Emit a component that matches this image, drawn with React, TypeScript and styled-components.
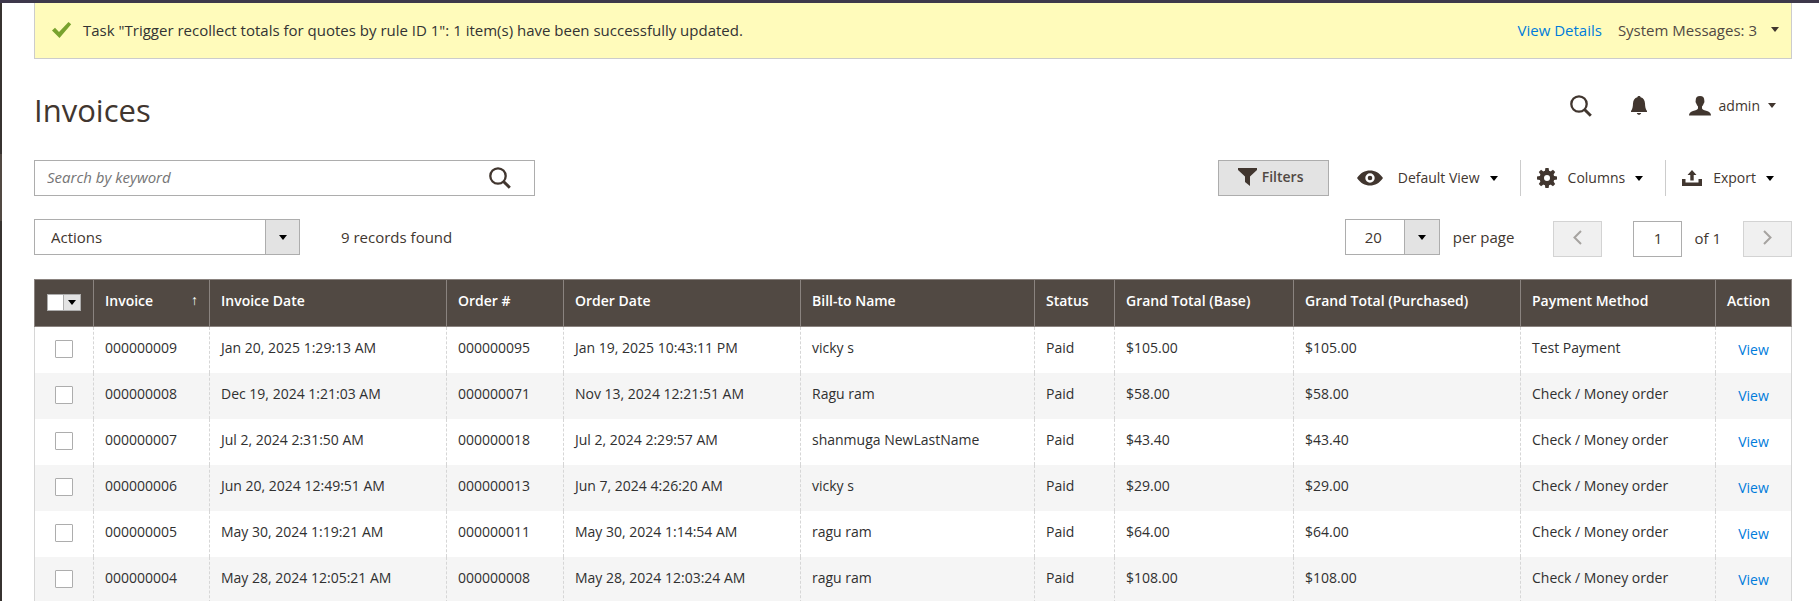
import React from "react";
import styled, { createGlobalStyle } from "styled-components";

const ink = "#41362f";
const border = "#adadad";

const GlobalStyle = createGlobalStyle`
  *, *::before, *::after { box-sizing: border-box; }
  body {
    margin: 0;
    background: #fff;
    color: ${ink};
    font-family: "Open Sans", "Noto Sans", sans-serif;
    font-size: 15px;
    line-height: 20px;
  }
  button, input, select { font: inherit; color: inherit; margin: 0; }
  button { cursor: pointer; }
`;

const Page = styled.div`
  display: flex;
  height: 100vh;
  overflow: hidden;
  border-top: 3px solid #3e384b;
`;

const MenuEdge = styled.div`
  flex: none;
  width: 2px;
  padding-top: 151px;
  background: #373330;
`;

const ActiveMenuEdge = styled.div`
  height: 67px;
  background: #514943;
`;

const Content = styled.main`
  flex: 1;
  min-width: 0;
  padding: 0 27px 0 32px;
`;

const Link = styled.a`
  color: #007bdb;
  text-decoration: none;
`;

const Banner = styled.div`
  display: flex;
  align-items: center;
  height: 56px;
  padding: 0 12px 2px 16px;
  background: #fffbbb;
  border: 1px solid #ccc;
  border-top: 0;
`;

const BannerText = styled.p`
  flex: 1;
  margin: 0 0 0 11px;
  color: #333;
`;

const PlainButton = styled.button<{ $gap?: number }>`
  display: inline-flex;
  align-items: center;
  gap: ${(p) => p.$gap ?? 0}px;
  padding: 0;
  border: 0;
  background: none;
  color: ${ink};
  white-space: nowrap;
`;

const MessagesButton = styled(PlainButton)`
  margin-left: 16px;
  color: #514943;
`;

const Caret = styled.span<{ $black?: boolean }>`
  width: 0;
  height: 0;
  border: 4px solid transparent;
  border-top: 5px solid ${(p) => (p.$black ? "#000" : ink)};
  border-bottom: 0;
`;

const Header = styled.header`
  display: flex;
  align-items: center;
  height: 101px;
  padding-right: 16px;
`;

const Title = styled.h1`
  flex: 1;
  margin: 0;
  font-size: 31px;
  font-weight: 400;
  line-height: 40px;
`;

const HeaderTools = styled.div`
  display: flex;
  align-items: center;
  margin-bottom: 8px;
  font-size: 14px;
`;

const NotificationButton = styled(PlainButton)`
  margin: 0 42px 0 38px;
`;

const Toolbar = styled.div`
  display: flex;
  justify-content: space-between;
  align-items: flex-start;
`;

const SearchForm = styled.form`
  display: flex;
  align-items: center;
  width: 501px;
  height: 36px;
  padding-right: 22px;
  border: 1px solid ${border};
`;

const SearchInput = styled.input`
  flex: 1;
  min-width: 0;
  height: 100%;
  padding: 0 12px 2px;
  border: 0;
  outline: 0;
  background: none;
  &::placeholder { color: #757575; font-style: italic; opacity: 1; }
`;

const GridTools = styled.div`
  display: flex;
  align-items: center;
  font-size: 14px;
`;

const FilterButton = styled.button`
  display: flex;
  align-items: center;
  gap: 5px;
  width: 111px;
  height: 36px;
  margin-right: 12px;
  padding: 0 19px 2px;
  background: #e3e3e3;
  border: 1px solid ${border};
  color: #514943;
  font-weight: 600;
`;

const Tool = styled.div<{ $divided?: boolean }>`
  display: flex;
  align-items: center;
  height: 36px;
  padding: 0 22px 0 16px;
  border-left: ${(p) => (p.$divided ? "1px solid #ccc" : "0")};
  &:last-child { padding-right: 18px; }
`;

const ToolLabel = styled.span`
  margin-right: 10px;
`;

const SecondRow = styled(Toolbar)`
  margin-top: 23px;
`;

const Group = styled.div`
  display: flex;
  align-items: flex-start;
  line-height: 36px;
`;

const Pager = styled(Group)`
  margin-top: 2px;
`;

const SelectBox = styled.div<{ $width: number; $arrow: number }>`
  display: grid;
  grid-template-columns: 1fr ${(p) => p.$arrow}px;
  grid-template-rows: 100%;
  width: ${(p) => p.$width}px;
  height: 36px;
  border: 1px solid ${border};
  background: #fff;
  line-height: 20px;
`;

const Select = styled.select<{ $pad: number }>`
  grid-area: 1 / 1 / 2 / 3;
  appearance: none;
  padding: 0 0 1px ${(p) => p.$pad}px;
  border: 0;
  border-radius: 0;
  background: none;
  outline: 0;
`;

const SelectArrow = styled.span`
  grid-area: 1 / 2 / 2 / 3;
  display: flex;
  align-items: center;
  justify-content: center;
  border-left: 1px solid ${border};
  background: #e3e3e3;
  pointer-events: none;
`;

const Records = styled.span`
  margin-left: 41px;
`;

const PerPage = styled.label`
  margin: 0 39px 0 13px;
`;

const PageButton = styled.button`
  display: flex;
  align-items: center;
  justify-content: center;
  width: 49px;
  height: 36px;
  padding: 0 0 3px;
  background: #f0f0f0;
  border: 1px solid #d3d3d3;
`;

const PageInput = styled.input`
  width: 49px;
  height: 36px;
  margin: 0 12px 0 31px;
  padding: 0 0 2px;
  border: 1px solid ${border};
  text-align: center;
`;

const PageTotal = styled.label`
  margin-right: 22px;
  line-height: 34px;
`;

const TableWrap = styled.div`
  margin-top: 22px;
  overflow-x: auto;
  overflow-y: hidden;
`;

const Table = styled.table`
  width: 100%;
  table-layout: fixed;
  border-collapse: separate;
  border-spacing: 0;
  font-size: 14px;
`;

const Col = styled.col<{ $width: number }>`
  width: ${(p) => p.$width}px;
`;

const HeadCell = styled.th`
  height: 48px;
  padding: 0 11px 4px;
  background: #514943;
  border: 1px solid #8a837f;
  border-right: 0;
  color: #fff;
  font-weight: 600;
  text-align: left;
  white-space: nowrap;
  &:last-child { border-right: 1px solid #8a837f; }
`;

const HeadInner = styled.div`
  display: flex;
  justify-content: space-between;
`;

const SortArrow = styled.span`
  font-weight: 400;
  line-height: 18px;
`;

const MassSelect = styled.div`
  display: flex;
  width: 34px;
  height: 17px;
  margin: 2px 0 0 1px;
  border: 1px solid ${border};
  background: #fff;
`;

const MassCheckbox = styled.input`
  flex: 1;
  appearance: none;
`;

const MassButton = styled.button`
  display: flex;
  align-items: center;
  justify-content: center;
  width: 17px;
  padding: 0;
  background: #e3e3e3;
  border: 0;
  border-left: 1px solid ${border};
`;

const Row = styled.tr`
  &:nth-child(even) { background: #f5f5f5; }
`;

const Cell = styled.td<{ $center?: boolean }>`
  height: 46px;
  padding: ${(p) => (p.$center ? "0 0 1px" : "0 11px 5px")};
  border-left: 1px dashed #d6d6d6;
  color: #303030;
  text-align: ${(p) => (p.$center ? "center" : "left")};
  white-space: nowrap;
  &:first-child { border-left-style: solid; }
  &:last-child { border-right: 1px solid #d6d6d6; }
`;

const RowCheckbox = styled.input`
  appearance: none;
  display: block;
  width: 18px;
  height: 18px;
  margin: 0 auto 1px;
  background: #fff;
  border: 1px solid ${border};
  border-radius: 1px;
`;

const Icon = styled.svg<{ $right?: number }>`
  display: block;
  flex: none;
  margin-right: ${(p) => p.$right ?? 0}px;
  fill: ${ink};
`;

const SearchIcon = () => (
  <Icon width="24" height="24" viewBox="0 0 24 24" aria-hidden="true">
    <circle cx="10" cy="10" r="7.700" fill="none" stroke={ink} strokeWidth="2.300" />
    <path d="M15.500 15.500l6.300 6.200" fill="none" stroke={ink} strokeWidth="3" />
  </Icon>
);

const toothAngles = [0, 45, 90, 135, 180, 225, 270, 315];

const GearIcon = () => (
  <Icon $right={11} width="20" height="20" viewBox="0 0 20 20" aria-hidden="true">
    <circle cx="10" cy="10" r="5.200" fill="none" stroke={ink} strokeWidth="4.400" />
    {toothAngles.map((angle) => (
      <path key={angle} d="M7.700 4l.7-4h3.200l.7 4z" transform={`rotate(${angle} 10 10)`} />
    ))}
  </Icon>
);

const widths = [59, 116, 237, 117, 237, 234, 80, 179, 227, 195, 77];
const headings = [
  "Invoice Date",
  "Order #",
  "Order Date",
  "Bill-to Name",
  "Status",
  "Grand Total (Base)",
  "Grand Total (Purchased)",
  "Payment Method",
  "Action",
];

const invoices = [
  ["000000009", "Jan 20, 2025 1:29:13 AM", "000000095", "Jan 19, 2025 10:43:11 PM", "vicky s", "Paid", "$105.00", "$105.00", "Test Payment"],
  ["000000008", "Dec 19, 2024 1:21:03 AM", "000000071", "Nov 13, 2024 12:21:51 AM", "Ragu ram", "Paid", "$58.00", "$58.00", "Check / Money order"],
  ["000000007", "Jul 2, 2024 2:31:50 AM", "000000018", "Jul 2, 2024 2:29:57 AM", "shanmuga NewLastName", "Paid", "$43.40", "$43.40", "Check / Money order"],
  ["000000006", "Jun 20, 2024 12:49:51 AM", "000000013", "Jun 7, 2024 4:26:20 AM", "vicky s", "Paid", "$29.00", "$29.00", "Check / Money order"],
  ["000000005", "May 30, 2024 1:19:21 AM", "000000011", "May 30, 2024 1:14:54 AM", "ragu ram", "Paid", "$64.00", "$64.00", "Check / Money order"],
  ["000000004", "May 28, 2024 12:05:21 AM", "000000008", "May 28, 2024 12:03:24 AM", "ragu ram", "Paid", "$108.00", "$108.00", "Check / Money order"],
];

export default function App() {
  return (
    <Page>
      <GlobalStyle />
      <MenuEdge>
        <ActiveMenuEdge />
      </MenuEdge>
      <Content>
        <Banner role="status">
          <Icon width="21" height="18" viewBox="0 0 21 18" aria-hidden="true">
            <path fill="#79a22e" d="M1 9.500l3-2.700 4 4.200L17.500 1l2.700 2.300L8.500 17z" />
          </Icon>
          <BannerText>
            Task "Trigger recollect totals for quotes by rule ID 1": 1 item(s) have been successfully updated.
          </BannerText>
          <Link href="#details">View Details</Link>
          <MessagesButton type="button" $gap={14}>
            System Messages: 3 <Caret />
          </MessagesButton>
        </Banner>

        <Header>
          <Title>Invoices</Title>
          <HeaderTools>
            <PlainButton type="button" aria-label="Search">
              <SearchIcon />
            </PlainButton>
            <NotificationButton type="button" aria-label="Notifications">
              <Icon width="16" height="19" viewBox="0 0 16 19" aria-hidden="true">
                <path d="M8 0c.9 0 1.500.5 1.600 1.200C12.500 2 13.800 4.300 14 7.500c.1 3.200.5 5.500 2 7.500v1H0v-1c1.500-2 1.900-4.300 2-7.500.2-3.200 1.500-5.500 4.400-6.300C6.500.5 7.100 0 8 0zM5.800 17h4.400c-.3 1.200-1.100 1.800-2.200 1.800S6.100 18.200 5.800 17z" />
              </Icon>
            </NotificationButton>
            <PlainButton type="button" $gap={8}>
              <Icon width="22" height="20" viewBox="0 0 22 20" aria-hidden="true">
                <path d="M11 0c2.900 0 4.300 1.600 4.300 4.200 0 .8.300 1.300 0 2.200-.2.600-.5.600-.7 1.300-.3 1.200-.9 2-1.600 2.700v2.100c.4 1.300 2.500 1.600 5 2.500 2.600.9 4 2 4 4.600H0c0-2.600 1.400-3.700 4-4.600 2.500-.9 4.600-1.200 5-2.500v-2.100c-.7-.7-1.300-1.500-1.600-2.700-.2-.7-.5-.7-.7-1.300-.3-.9 0-1.400 0-2.200C6.700 1.600 8.100 0 11 0z" />
              </Icon>
              admin <Caret />
            </PlainButton>
          </HeaderTools>
        </Header>

        <Toolbar>
          <SearchForm role="search">
            <SearchInput type="text" aria-label="Search by keyword" placeholder="Search by keyword" />
            <PlainButton type="button" aria-label="Submit search">
              <SearchIcon />
            </PlainButton>
          </SearchForm>
          <GridTools>
            <FilterButton type="button">
              <Icon width="19" height="18" viewBox="0 0 19 18" aria-hidden="true">
                <path d="M0 0h19v2l-7 6.500V18l-5-4V8.500L0 2z" />
              </Icon>
              Filters
            </FilterButton>
            <Tool>
              <PlainButton type="button">
                <Icon $right={15} width="26" height="16" viewBox="0 0 26 16" aria-hidden="true">
                  <path fillRule="evenodd" d="M0 8C3.500 2.800 8 .5 13 .5S22.500 2.800 26 8c-3.500 5.200-8 7.500-13 7.500S3.500 13.200 0 8zm13-4.700a4.700 4.700 0 1 0 0 9.400 4.700 4.700 0 0 0 0-9.400zm0 2.400a2.300 2.300 0 1 1 0 4.600 2.300 2.300 0 0 1 0-4.600z" />
                </Icon>
                <ToolLabel>Default View</ToolLabel>
                <Caret $black />
              </PlainButton>
            </Tool>
            <Tool $divided>
              <PlainButton type="button">
                <GearIcon />
                <ToolLabel>Columns</ToolLabel>
                <Caret $black />
              </PlainButton>
            </Tool>
            <Tool $divided>
              <PlainButton type="button">
                <Icon $right={11} width="20" height="16" viewBox="0 0 20 16" aria-hidden="true">
                  <path d="M10 0l4.500 5h-2.800v5.500H8.300V5H5.500zM0 9h3.500v3.500h13V9H20v7H0z" />
                </Icon>
                <ToolLabel>Export</ToolLabel>
                <Caret $black />
              </PlainButton>
            </Tool>
          </GridTools>
        </Toolbar>

        <SecondRow>
          <Group>
            <SelectBox $width={266} $arrow={34}>
              <Select $pad={16} aria-label="Actions">
                <option>Actions</option>
              </Select>
              <SelectArrow><Caret $black /></SelectArrow>
            </SelectBox>
            <Records>9 records found</Records>
          </Group>
          <Group>
            <SelectBox $width={95} $arrow={35}>
              <Select $pad={19} id="page-size">
                <option>20</option>
              </Select>
              <SelectArrow><Caret $black /></SelectArrow>
            </SelectBox>
            <PerPage htmlFor="page-size">per page</PerPage>
            <Pager>
              <PageButton type="button" aria-label="Previous page">
                <Icon width="9" height="15" viewBox="0 0 9 15" aria-hidden="true">
                  <path d="M8 1L1.500 7.500 8 14" fill="none" stroke="#a6a3a0" strokeWidth="2" />
                </Icon>
              </PageButton>
              <PageInput type="text" id="page-number" defaultValue="1" />
              <PageTotal htmlFor="page-number">of 1</PageTotal>
              <PageButton type="button" aria-label="Next page">
                <Icon width="9" height="15" viewBox="0 0 9 15" aria-hidden="true">
                  <path d="M1 1l6.500 6.500L1 14" fill="none" stroke="#a6a3a0" strokeWidth="2" />
                </Icon>
              </PageButton>
            </Pager>
          </Group>
        </SecondRow>

        <TableWrap>
          <Table>
            <colgroup>
              {widths.map((w, i) => <Col key={i} $width={w} />)}
            </colgroup>
            <thead>
              <tr>
                <HeadCell>
                  <MassSelect>
                    <MassCheckbox type="checkbox" aria-label="Select all invoices" />
                    <MassButton type="button" aria-label="Selection options"><Caret $black /></MassButton>
                  </MassSelect>
                </HeadCell>
                <HeadCell>
                  <HeadInner>Invoice <SortArrow>↑</SortArrow></HeadInner>
                </HeadCell>
                {headings.map((h) => <HeadCell key={h}>{h}</HeadCell>)}
              </tr>
            </thead>
            <tbody>
              {invoices.map((invoice) => (
                <Row key={invoice[0]}>
                  <Cell $center>
                    <RowCheckbox type="checkbox" aria-label={`Select invoice ${invoice[0]}`} />
                  </Cell>
                  {invoice.map((value, i) => <Cell key={i}>{value}</Cell>)}
                  <Cell $center><Link href={`#invoice-${invoice[0]}`}>View</Link></Cell>
                </Row>
              ))}
            </tbody>
          </Table>
        </TableWrap>
      </Content>
    </Page>
  );
}
